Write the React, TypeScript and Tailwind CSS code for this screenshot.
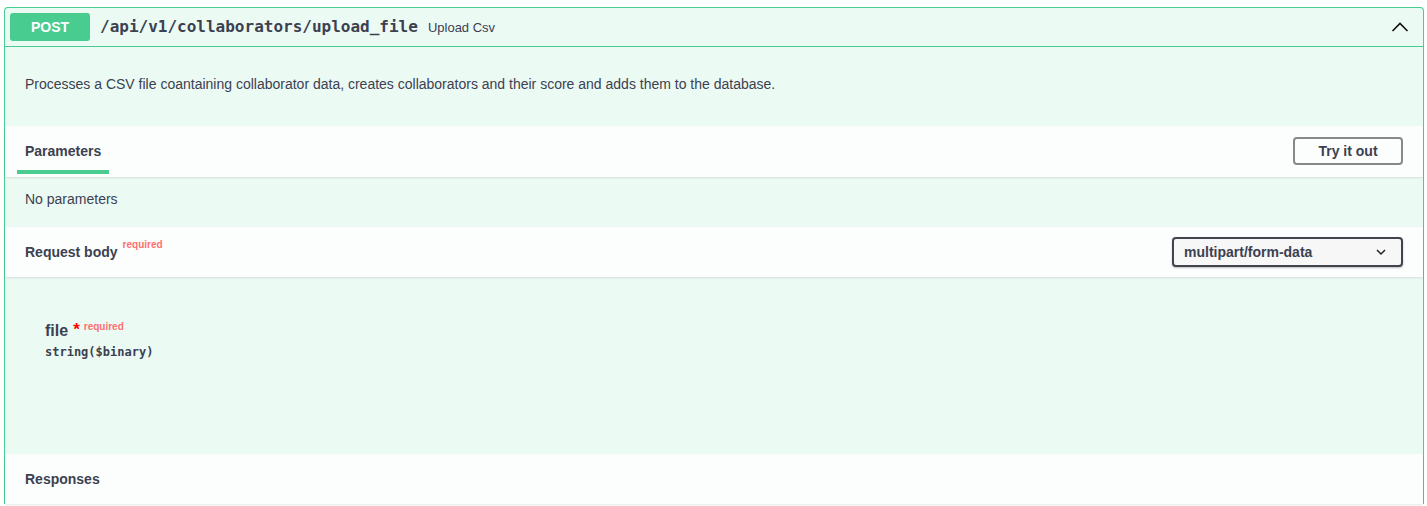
import React from "react";

const sans = "font-['Liberation_Sans',Arial,sans-serif]";
const mono = "font-['DejaVu_Sans_Mono',monospace]";

const SectionHeader: React.FC<{ children: React.ReactNode; h?: string }> = ({ children, h = "h-[50px]" }) => (
  <div className={`${h} relative flex items-center justify-between bg-[#fbfefc] px-5 shadow-[0_1px_2px_rgba(0,0,0,0.1)]`}>
    {children}
  </div>
);

export default function App() {
  return (
    <div className={`${sans} min-h-[506px] bg-white pt-[7px] pl-1 pr-[3px] text-[#3b4151]`}>
      <div className="rounded-t-[4px] border border-b-0 border-[#49cc90] bg-[#ecfaf4]">
        {/* Summary bar */}
        <div className="flex h-[39px] items-center border-b border-[#49cc90] px-[5px]">
          <span className="flex h-[28px] w-[80px] items-center justify-center rounded-[3px] bg-[#49cc90] text-sm font-bold text-white">
            POST
          </span>
          <span className={`${mono} ml-[10px] text-base font-semibold text-[#3b4151]`}>
            /api/v1/collaborators/upload_file
          </span>
          <span className="ml-[10px] mt-[2px] text-[13px] text-[#3b4151]">Upload Csv</span>
          <svg className="ml-auto mr-[8px]" width="20" height="20" viewBox="0 0 20 20">
            <path d="M2.5 14 L10 6.5 L17.5 14" fill="none" stroke="#111" strokeWidth="1.6" />
          </svg>
        </div>

        {/* Description */}
        <div className="h-[79px] px-5 pt-[29px] text-sm leading-[16px]">
          Processes a CSV file coantaining collaborator data, creates collaborators and their score and adds them to the database.
        </div>

        {/* Parameters */}
        <SectionHeader h="h-[51px] pb-[1px]">
          <div className="relative flex h-full items-center text-sm font-bold">
            Parameters
            <span className="absolute -left-2 -right-2 bottom-[2px] h-[4px] bg-[#49cc90]" />
          </div>
          <button className="flex h-[28px] w-[110px] items-center justify-center rounded-[4px] border-2 border-[#888] text-sm font-bold">
            Try it out
          </button>
        </SectionHeader>
        <div className="h-[50px] px-5 pt-[14px] text-sm leading-[16px]">No parameters</div>

        {/* Request body */}
        <SectionHeader>
          <div className="flex items-start text-sm font-bold">
            Request body
            <span className="ml-[5px] -mt-[4px] text-[10px] font-bold text-[#ff6f6f]">required</span>
          </div>
          <div className="flex h-[30px] w-[231px] items-center justify-between rounded-[4px] border-2 border-[#41444e] bg-[#f7f7f7] pl-[10px] pr-[14px] text-sm font-bold shadow-[0_1px_2px_rgba(0,0,0,0.25)]">
            multipart/form-data
            <svg width="12" height="8" viewBox="0 0 12 8">
              <path d="M2 2 L6 6 L10 2" fill="none" stroke="#222" strokeWidth="1.5" />
            </svg>
          </div>
        </SectionHeader>
        <div className="h-[177px] px-10 pt-[42px]">
          <div className="flex items-start">
            <span className="text-base font-semibold text-[#3b4151]">file</span>
            <span className="ml-[5px] mt-[1px] text-[17px] font-bold leading-[20px] text-[#ff0000]">*</span>
            <span className="ml-[4px] mt-0 text-[10px] font-bold text-[#ff6f6f]">required</span>
          </div>
          <div className={`${mono} mt-[1px] text-xs font-semibold text-[#3b4151]`}>string($binary)</div>
        </div>

        {/* Responses */}
        <SectionHeader>
          <div className="text-sm font-bold">Responses</div>
        </SectionHeader>
      </div>
    </div>
  );
}
